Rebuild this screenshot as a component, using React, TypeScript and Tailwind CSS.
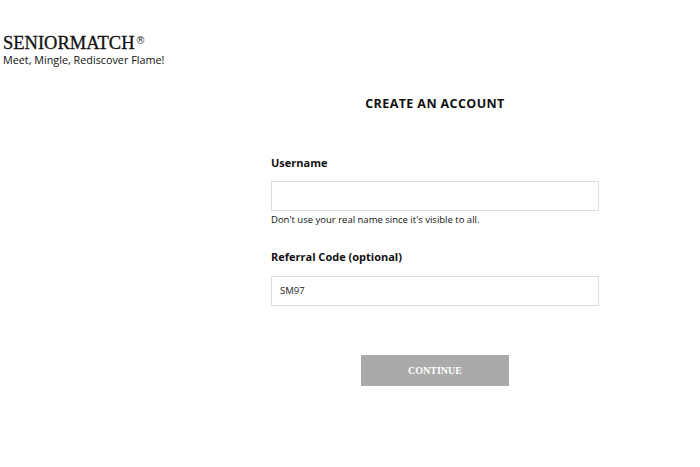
import React from "react";

export default function App() {
  return (
    <div className="w-[700px] h-[467px] bg-white text-[#222] overflow-hidden relative">
      <div className="pt-[34px] pl-[3px]">
        <div className="flex items-start leading-none">
          <span className="text-[18.5px] text-[#111]" style={{ fontFamily: '"Liberation Serif", serif', WebkitTextStroke: "0.3px #111" }}>SENIORMATCH</span>
          <span className="text-[10px] ml-[1px] mt-[2px] text-[#333]" style={{ fontFamily: '"DejaVu Sans", sans-serif' }}>®</span>
        </div>
        <div className="text-[10.8px] leading-none mt-[2px] text-[#111]" style={{ fontFamily: '"Open Sans", sans-serif' }}>
          Meet, Mingle, Rediscover Flame!
        </div>
      </div>
      <div className="ml-[271px] w-[328px] flex flex-col" style={{ fontFamily: '"Open Sans", sans-serif' }}>
        <h1 className="text-center font-bold text-[12.5px] tracking-[0.4px] leading-none mt-[33px] text-[#111]">CREATE AN ACCOUNT</h1>
        <label className="font-bold text-[11px] leading-none mt-[46px] text-[#111]">Username</label>
        <div className="h-[30px] border border-[#ddd] mt-[13px]" />
        <div className="text-[9.5px] leading-none mt-[4px] text-[#111]">Don't use your real name since it's visible to all.</div>
        <label className="font-bold text-[11px] leading-none mt-[27px] text-[#111]">Referral Code (optional)</label>
        <div className="h-[30px] border border-[#ddd] mt-[14px] flex items-center px-[8px] text-[9.5px] text-[#222]">SM97</div>
        <div className="flex justify-center mt-[49px]">
          <button className="w-[148px] h-[31px] bg-[#aaaaaa] text-white font-bold text-[10px]" style={{ fontFamily: '"Liberation Serif", serif' }}>CONTINUE</button>
        </div>
      </div>
    </div>
  );
}
